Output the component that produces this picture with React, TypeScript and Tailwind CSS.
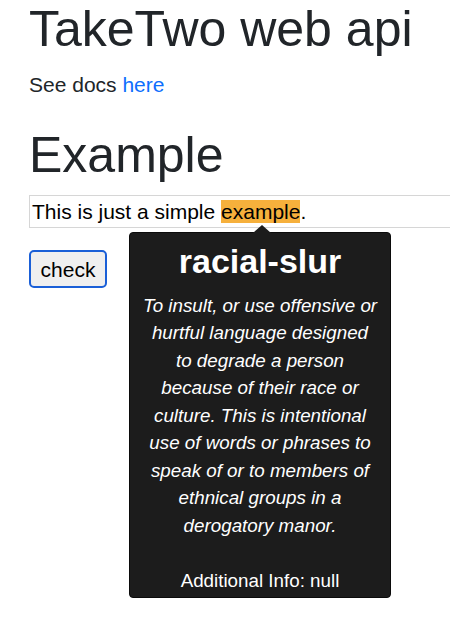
import React from "react";

const descLines = [
  "To insult, or use offensive or",
  "hurtful language designed",
  "to degrade a person",
  "because of their race or",
  "culture. This is intentional",
  "use of words or phrases to",
  "speak of or to members of",
  "ethnical groups in a",
  "derogatory manor.",
];

const Tooltip = () => {
  return (
    <div className="absolute left-[100px] top-[37px] w-[262px] rounded-[4px] border border-[#0b0b0b] bg-[#1c1c1c] px-[10px] pt-[8px] pb-[3px] text-center text-white">
      <div className="absolute -top-[8px] left-[123px] h-0 w-0 border-x-[9px] border-b-[8px] border-x-transparent border-b-[#1c1c1c]" />
      <h3 className="mb-[10px] text-[34px] font-bold leading-[40.8px]">racial-slur</h3>
      <div className="text-[18.8px] leading-[27.5px]">
        <span className="italic">
          {descLines.map((line, i) => (
            <React.Fragment key={i}>
              <span className="whitespace-nowrap">{line}</span>
              {i < descLines.length - 1 && <br />}
            </React.Fragment>
          ))}
        </span>
        <br />
        <br />
        Additional Info: null
      </div>
    </div>
  );
};

export default function App() {
  return (
    <div
      className="h-[644px] w-[450px] overflow-hidden bg-white pl-[29px] text-[#212529]"
      style={{ fontFamily: '"Liberation Sans", Arial, sans-serif' }}
    >
      <h1 className="mb-[12px] text-[50px] font-medium leading-[58px]">TakeTwo web api</h1>
      <p className="mb-[26px] text-[21px] leading-[30px]">
        See docs <a className="text-[#0d6efd]">here</a>
      </p>
      <h1 className="mb-[11px] text-[50px] font-medium leading-[58px]">Example</h1>

      <div className="relative">
        <div className="w-[440px] border border-[#d6d6d6] pl-[2px] text-[21px] leading-[31px] text-black">
          This is just a simple <span className="bg-[#f6b03c]">example</span>.
        </div>
        <Tooltip />
      </div>

      <button className="mt-[22px] h-[38px] w-[78px] rounded-[5px] border-2 border-[#1a5fd7] bg-[#efefef] text-[21px] leading-none text-black">
        check
      </button>
    </div>
  );
}
